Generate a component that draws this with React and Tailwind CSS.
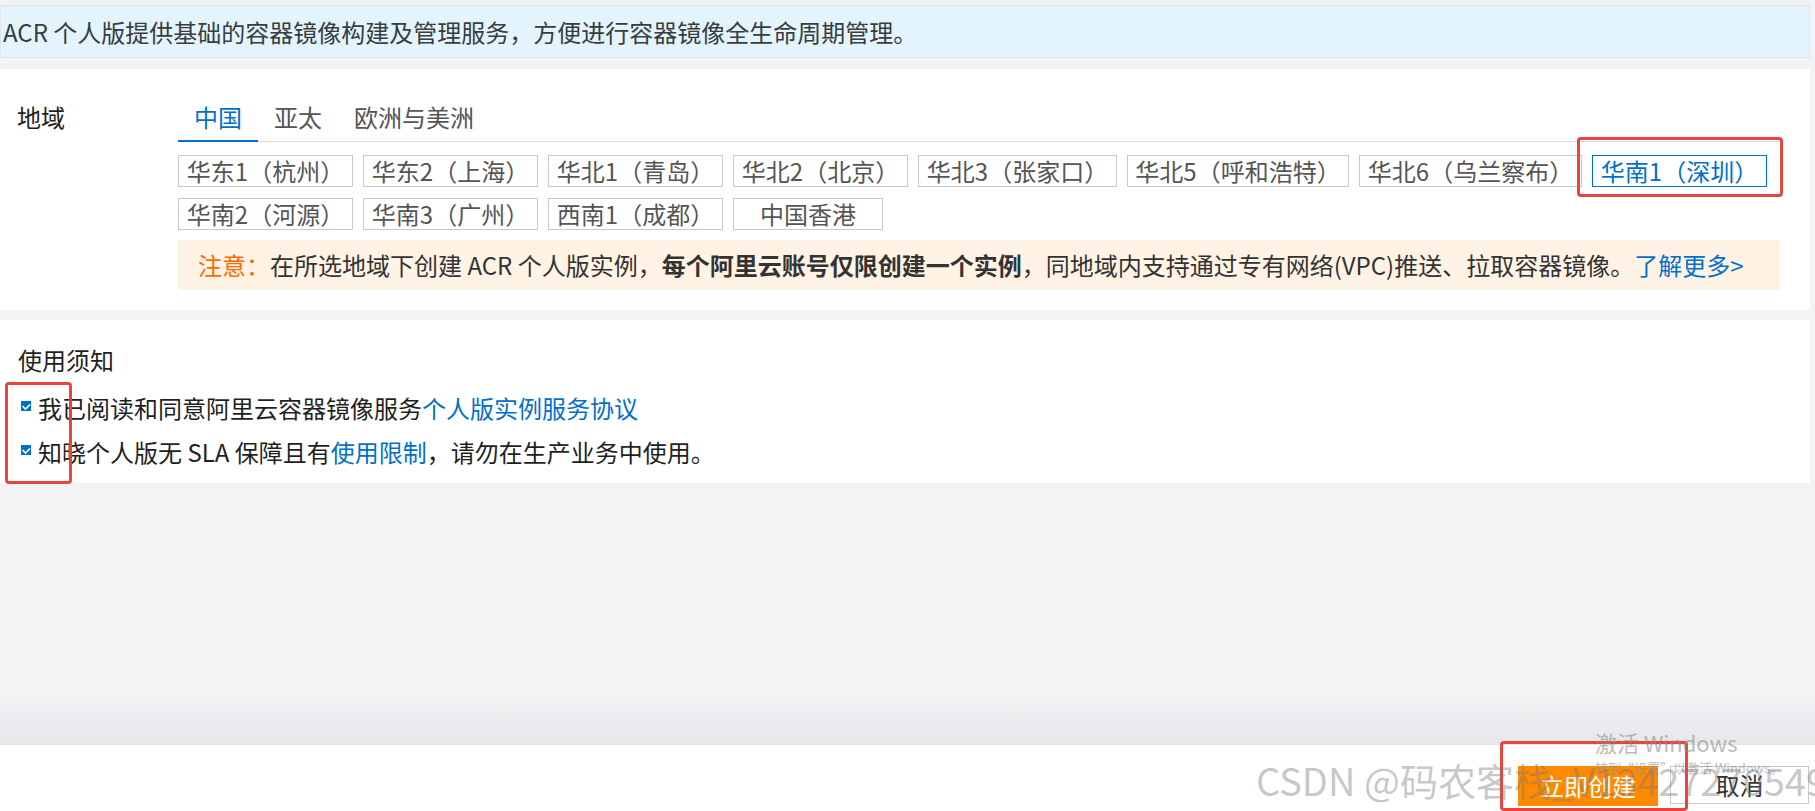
import React from 'react';

const font = { fontFamily: '"Noto Sans CJK SC", "Noto Sans", sans-serif' };

const regionsRow1 = [
  { name: '华东1（杭州）', w: 'w-[175px]' },
  { name: '华东2（上海）', w: 'w-[175px]' },
  { name: '华北1（青岛）', w: 'w-[175px]' },
  { name: '华北2（北京）', w: 'w-[175px]' },
  { name: '华北3（张家口）', w: 'w-[199px]' },
  { name: '华北5（呼和浩特）', w: 'w-[222px]' },
  { name: '华北6（乌兰察布）', w: 'w-[223px]' },
  { name: '华南1（深圳）', w: 'w-[175px]', active: true },
];

const regionsRow2 = [
  { name: '华南2（河源）', w: 'w-[175px]' },
  { name: '华南3（广州）', w: 'w-[175px]' },
  { name: '西南1（成都）', w: 'w-[175px]' },
  { name: '中国香港', w: 'w-[150px]' },
];

const Chip = ({ name, w, active }) => (
  <div
    className={`${w} h-[32px] flex items-center justify-center whitespace-nowrap border leading-[30px] ${
      active ? 'border-[#0070cc] text-[#0070cc]' : 'border-[#c9c9c9] text-[#555]'
    }`}
  >
    {name}
  </div>
);

const Check = () => (
  <svg width="10" height="10" viewBox="0 0 10 10" className="shrink-0">
    <rect x="0" y="0" width="10" height="10" fill="#0070cc" />
    <polyline points="1.5,5 4.5,8 9,3.5" fill="none" stroke="#fff" strokeWidth="1.6" />
  </svg>
);

const App = () => {
  return (
    <div className="relative w-[1815px] h-[811px] overflow-hidden bg-[#f2f3f5] flex flex-col text-[24px]" style={font}>
      {/* Content */}
      <div className="pr-[5px] pt-[5px] flex flex-col">
        {/* Info bar */}
        <div className="h-[53px] flex items-center pl-[2px] bg-[#e4f4fd] border border-[#dfe6ec] text-[#373d41] whitespace-nowrap">
          ACR 个人版提供基础的容器镜像构建及管理服务，方便进行容器镜像全生命周期管理。
        </div>

        {/* Region section */}
        <div className="mt-[11px] bg-white pt-[32px] pb-[20px] flex">
          <div className="w-[178px] pl-[17px] leading-[32px] text-[#222]">地域</div>
          <div className="w-[1602px]">
            <div className="flex border-b border-[#dcdcdc]">
              <div className="px-4 leading-[32px] pb-[7px] border-b-2 border-[#0070cc] -mb-px text-[#0070cc]">中国</div>
              <div className="px-4 leading-[32px] pb-[7px] border-b-2 border-transparent -mb-px text-[#555]">亚太</div>
              <div className="px-4 leading-[32px] pb-[7px] border-b-2 border-transparent -mb-px text-[#555]">欧洲与美洲</div>
            </div>

            <div className="mt-[13px] flex gap-[10px]">
              {regionsRow1.map(r => (
                <Chip key={r.name} {...r} />
              ))}
            </div>
            <div className="mt-[11px] flex gap-[10px]">
              {regionsRow2.map(r => (
                <Chip key={r.name} {...r} />
              ))}
            </div>

            <div className="mt-[10px] h-[50px] flex items-center pl-[20px] bg-[#fff3e6] text-[#333] whitespace-nowrap">
              <span className="text-[#ff6a00]">注意：</span>
              <span>在所选地域下创建 ACR 个人版实例，</span>
              <span className="font-bold">每个阿里云账号仅限创建一个实例</span>
              <span>，同地域内支持通过专有网络(VPC)推送、拉取容器镜像。</span>
              <span className="text-[#0070cc]">了解更多&gt;</span>
            </div>
          </div>
        </div>

        {/* Notice section */}
        <div className="mt-[10px] bg-white pt-[24px] pb-[9px] text-[#1f1f1f]">
          <div className="pl-[18px] leading-[32px]">使用须知</div>
          <div className="mt-[10px]">
            <div className="h-[44px] flex items-center">
              <div className="w-[38px] flex justify-end pr-[7px] -mt-[5px]">
                <Check />
              </div>
              <span>我已阅读和同意阿里云容器镜像服务</span>
              <span className="text-[#0070cc]">个人版实例服务协议</span>
            </div>
            <div className="h-[44px] flex items-center">
              <div className="w-[38px] flex justify-end pr-[7px] -mt-[5px]">
                <Check />
              </div>
              <span>知晓个人版无 SLA 保障且有</span>
              <span className="text-[#0070cc]">使用限制</span>
              <span>，请勿在生产业务中使用。</span>
            </div>
          </div>
        </div>
      </div>

      {/* Empty gray area with footer shadow */}
      <div className="flex-1 flex flex-col justify-end">
        <div className="h-[50px] bg-linear-to-b from-transparent to-[#e6e7ea]"></div>
      </div>

      {/* Footer */}
      <div className="h-[67px] bg-white border-t border-[#e1e2e4] flex justify-end items-start pt-[21px] pr-[6px] gap-[12px]">
        <button className="w-[140px] h-[40px] bg-[#ff8a00] text-white">立即创建</button>
        <button className="w-[139px] h-[38px] border border-[#c9c9c9] bg-white text-[#333]">取消</button>
      </div>

      {/* Red annotation boxes */}
      <div className="absolute left-[1577px] top-[137px] w-[206px] h-[60px] border-[3px] border-[#e8453c] rounded-[4px]"></div>
      <div className="absolute left-[5px] top-[382px] w-[67px] h-[102px] border-[3px] border-[#e8453c] rounded-[4px]"></div>
      <div className="absolute left-[1500px] top-[741px] w-[188px] h-[70px] border-[3px] border-[#e8453c] rounded-[4px]"></div>

      {/* Watermarks */}
      <div className="absolute left-[1595px] top-[731px] text-[22px] leading-[22px] text-[rgba(140,140,140,0.6)] whitespace-nowrap">激活 Windows</div>
      <div className="absolute left-[1595px] top-[761px] text-[13px] leading-[14px] text-[rgba(140,140,140,0.6)] whitespace-nowrap">转到“设置”以激活 Windows。</div>
      <div className="absolute left-[1256px] top-[761px] text-[38px] leading-[38px] text-[rgba(120,120,120,0.42)] whitespace-nowrap">CSDN @码农客栈_V13427270549</div>
    </div>
  );
};

export default App;
